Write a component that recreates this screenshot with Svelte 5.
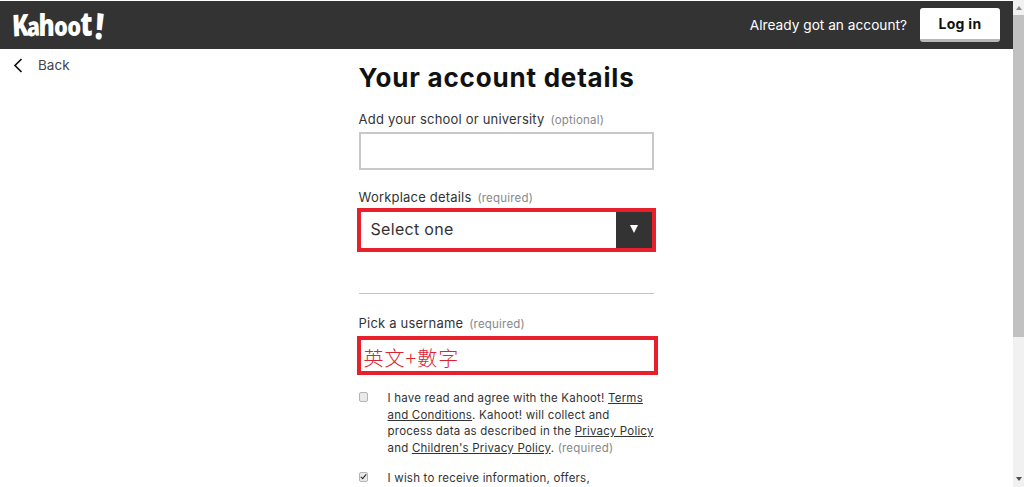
<script>
	let school = $state('');
</script>

<div class="page">
	<main class="content">
		<header class="topbar">
			<div class="logo" aria-label="Kahoot!">
				<span class="k">K</span><span class="a">a</span><span class="h">h</span><span class="o1">o</span><span class="o2">o</span><span class="t">t</span><span class="bang">!</span>
			</div>
			<div class="account">
				<span>Already got an account?</span>
				<button class="login">Log in</button>
			</div>
		</header>

		<div class="body">
			<a class="back" href="#back">
				<svg width="10" height="15" viewBox="0 0 10 15" aria-hidden="true">
					<path d="M8.5 1 L2 7.5 L8.5 14" fill="none" stroke="#111" stroke-width="1.7" />
				</svg>
				<span>Back</span>
			</a>

			<form class="form">
				<h1>Your account details</h1>

				<div class="label first">Add your school or university <small>(optional)</small></div>
				<input class="text" bind:value={school} />

				<div class="label second">Workplace details <small>(required)</small></div>
				<div class="select mark">
					<span class="value">Select one</span>
					<span class="arrow"><i></i></span>
				</div>

				<hr />

				<div class="label third">Pick a username <small>(required)</small></div>
				<div class="username mark">英文+數字</div>

				<div class="check one">
					<input type="checkbox" />
					<p>I have read and agree with the Kahoot! <u>Terms</u><br /><u>and Conditions</u>. Kahoot! will collect and<br />process data as described in the <u>Privacy Policy</u><br />and <u>Children's Privacy Policy</u>. <small>(required)</small></p>
				</div>
				<div class="check two">
					<input type="checkbox" checked />
					<p>I wish to receive information, offers,</p>
				</div>
			</form>
		</div>
	</main>

	<div class="scrollbar">
		<span class="up"></span>
		<span class="thumb"></span>
		<span class="down"></span>
	</div>
</div>

<style>
	:global(body) {
		margin: 0;
		overflow: hidden;
		background: #fff;
	}

	.page {
		display: flex;
		height: 487px;
		overflow: hidden;
		font-family: Inter, "Open Sans", sans-serif;
		color: #333;
	}

	.content {
		flex: 1;
		min-width: 0;
	}

	.topbar {
		display: flex;
		align-items: center;
		justify-content: space-between;
		height: 48px;
		margin-top: 1px;
		padding: 0 13px 0 12px;
		background: #333;
		color: #fff;
	}

	.logo {
		display: flex;
		align-items: baseline;
		height: 30px;
		margin-top: -5px;
		font-family: "Open Sans", sans-serif;
		font-weight: 800;
		font-size: 29px;
		line-height: 30px;
		color: #fff;
		transform: scaleX(0.81);
		transform-origin: left center;
	}

	.logo span {
		display: block;
	}

	.logo .k {
		font-size: 30px;
		transform: rotate(-3deg);
	}

	.logo .a {
		margin-left: -3px;
		font-size: 26px;
		transform: rotate(-4deg);
	}

	.logo .h {
		margin-left: -1px;
		font-size: 30px;
	}

	.logo .o1,
	.logo .o2 {
		font-size: 27px;
		margin-left: -1px;
	}

	.logo .t {
		margin-left: -1px;
		font-size: 33px;
	}

	.logo .bang {
		margin-left: 3px;
		font-size: 36px;
		transform: translateY(3px) rotate(6deg);
	}

	.account {
		display: flex;
		align-items: center;
		gap: 13px;
		font-size: 13.7px;
	}

	.login {
		width: 80px;
		height: 34px;
		border: 0;
		border-bottom: 3px solid #b8b8b8;
		border-radius: 3px;
		background: #fff;
		color: #111;
		font: 700 14px Inter, "Open Sans", sans-serif;
		letter-spacing: 0.3px;
	}

	.body {
		display: flex;
	}

	.back {
		display: flex;
		align-items: center;
		gap: 15px;
		height: 16px;
		margin: 8px 0 0 13px;
		color: #444;
		font-size: 13.5px;
		text-decoration: none;
	}

	.form {
		width: 295px;
		margin-left: 289px;
	}

	h1 {
		margin: 14px 0 0;
		font-size: 26px;
		line-height: 30px;
		font-weight: 700;
		color: #111;
		letter-spacing: 0.8px;
	}

	.label {
		font-size: 13px;
		line-height: 16px;
		color: #333;
		letter-spacing: 0.2px;
	}

	.label small,
	.check small {
		margin-left: 2px;
		font-size: 11.5px;
		color: #888;
	}

	.check small {
		margin-left: 0;
	}

	.first {
		margin-top: 18px;
	}

	.text {
		display: block;
		box-sizing: border-box;
		width: 295px;
		height: 38px;
		margin-top: 4px;
		border: 2px solid #c8c8c8;
		background: #fff;
	}

	.second {
		margin-top: 19px;
	}

	.mark {
		box-sizing: border-box;
		border: 4px solid #e8202c;
	}

	.select {
		display: flex;
		width: 299px;
		height: 44px;
		margin: 2px 0 0 -2px;
		padding-left: 10px;
		font-size: 16px;
		letter-spacing: 0.3px;
		color: #333;
	}

	.value {
		flex: 1;
		align-self: center;
		margin-top: -3px;
	}

	.arrow {
		display: flex;
		align-items: center;
		justify-content: center;
		width: 36px;
		background: #333;
	}

	.arrow i {
		width: 0;
		height: 0;
		border-left: 4.5px solid transparent;
		border-right: 4.5px solid transparent;
		border-top: 8px solid #fff;
		margin-bottom: 3px;
	}

	hr {
		height: 1px;
		margin: 41px 0 0;
		border: 0;
		background: #c4c4c4;
	}

	.third {
		margin-top: 21px;
	}

	.username {
		width: 301px;
		height: 39px;
		margin: 4px 0 0 -2px;
		padding-left: 3px;
		font-family: "Noto Sans CJK TC", sans-serif;
		font-weight: 300;
		font-size: 20px;
		letter-spacing: 1px;
		line-height: 36px;
		color: #d92432;
	}

	.check {
		display: flex;
		font-size: 11.5px;
		line-height: 16.7px;
		letter-spacing: 0.2px;
		color: #333;
	}

	.check input {
		appearance: none;
		position: relative;
		flex: none;
		box-sizing: border-box;
		width: 9px;
		height: 10px;
		margin: 2px 20px 0 0;
		border: 1px solid #b4b4b4;
		border-radius: 2px;
		background: #e9e9e9;
	}

	.check input:checked::after {
		content: '';
		position: absolute;
		left: 2px;
		top: 0;
		width: 2px;
		height: 5px;
		border: solid #222;
		border-width: 0 1.5px 1.5px 0;
		transform: rotate(40deg);
	}

	.check p {
		margin: 0;
		white-space: nowrap;
	}

	.one {
		margin-top: 15px;
	}

	.two {
		margin-top: 13px;
	}

	.scrollbar {
		flex: none;
		display: flex;
		flex-direction: column;
		align-items: center;
		width: 11px;
		background: #f1f1f1;
	}

	.up,
	.down {
		flex: none;
		width: 0;
		height: 0;
		border-left: 3.5px solid transparent;
		border-right: 3.5px solid transparent;
	}

	.up {
		margin: 6px 0 5px;
		border-bottom: 4px solid #8a8a8a;
	}

	.thumb {
		flex: none;
		width: 100%;
		height: 322px;
		background: #c1c1c1;
	}

	.down {
		margin-top: auto;
		margin-bottom: 6px;
		border-top: 4px solid #505050;
	}
</style>
